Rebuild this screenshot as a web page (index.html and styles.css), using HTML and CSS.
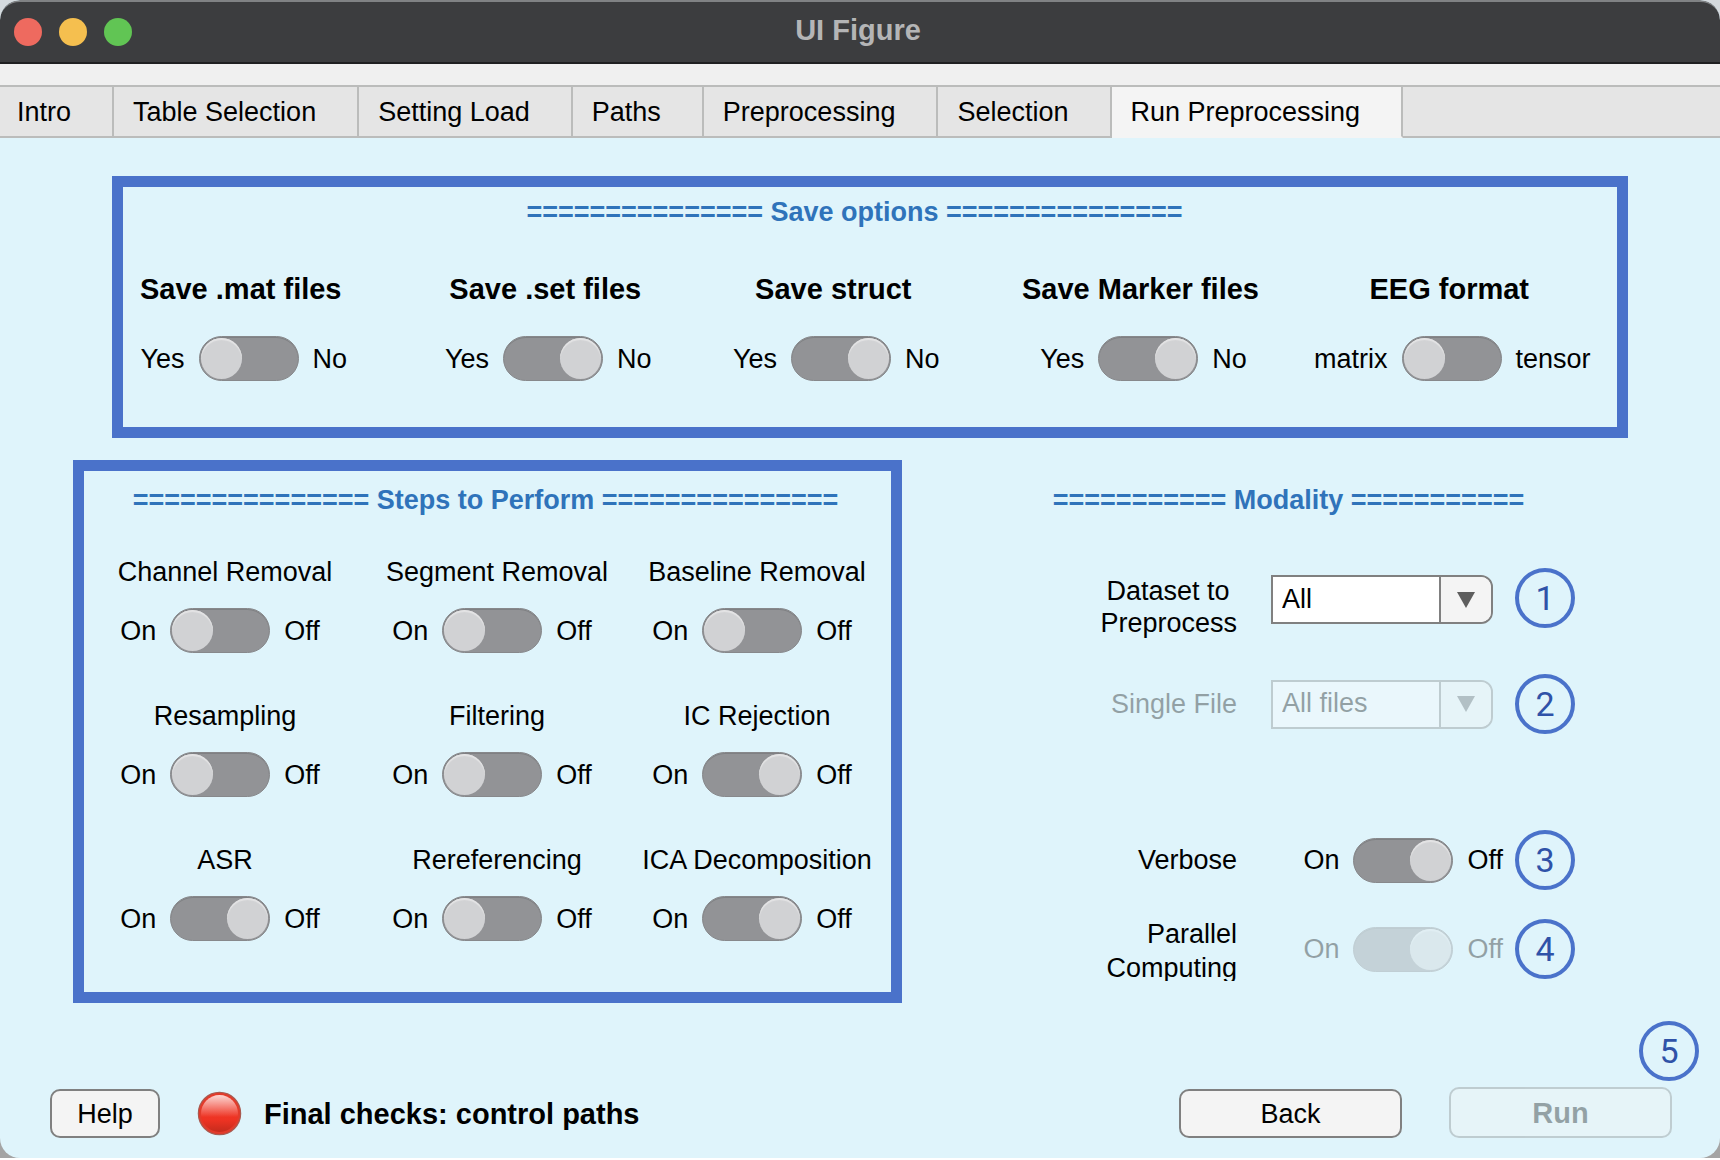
FILE: index.html
```html
<!DOCTYPE html>
<html lang="en">
<head>
<meta charset="utf-8">
<title>UI Figure</title>
<link rel="stylesheet" href="styles.css">
</head>
<body>
<div class="desktop">
<div class="window">
  <header class="titlebar">
    <div class="lights">
      <span class="light light-close"></span>
      <span class="light light-min"></span>
      <span class="light light-zoom"></span>
    </div>
    <h1 class="title">UI Figure</h1>
  </header>
  <nav class="tabs" role="tablist">
    <button class="tab" role="tab" type="button">Intro</button>
    <button class="tab" role="tab" type="button">Table Selection</button>
    <button class="tab" role="tab" type="button">Setting Load</button>
    <button class="tab" role="tab" type="button">Paths</button>
    <button class="tab" role="tab" type="button">Preprocessing</button>
    <button class="tab" role="tab" type="button">Selection</button>
    <button class="tab tab-active" role="tab" type="button" aria-selected="true">Run Preprocessing</button>
    <span class="tabs-rest"></span>
  </nav>

  <main class="content">
    <section class="frame save">
      <h2 class="heading">=============== Save options ===============</h2>
      <div class="save-grid">
        <div class="option">
          <label class="option-name" for="save-mat">Save .mat files</label>
          <div class="switch-row"><span>Yes</span><input class="switch" type="checkbox" role="switch" id="save-mat"><span>No</span></div>
        </div>
        <div class="option">
          <label class="option-name" for="save-set">Save .set files</label>
          <div class="switch-row"><span>Yes</span><input class="switch" type="checkbox" role="switch" id="save-set" checked><span>No</span></div>
        </div>
        <div class="option">
          <label class="option-name" for="save-struct">Save struct</label>
          <div class="switch-row"><span>Yes</span><input class="switch" type="checkbox" role="switch" id="save-struct" checked><span>No</span></div>
        </div>
        <div class="option">
          <label class="option-name" for="save-marker">Save Marker files</label>
          <div class="switch-row"><span>Yes</span><input class="switch" type="checkbox" role="switch" id="save-marker" checked><span>No</span></div>
        </div>
        <div class="option">
          <label class="option-name" for="eeg-format">EEG format</label>
          <div class="switch-row"><span>matrix</span><input class="switch" type="checkbox" role="switch" id="eeg-format"><span>tensor</span></div>
        </div>
      </div>
    </section>

    <div class="columns">
      <section class="frame steps">
        <h2 class="heading">=============== Steps to Perform ===============</h2>
        <div class="steps-grid">
          <div class="step">
            <label class="step-name" for="channel">Channel Removal</label>
            <div class="switch-row"><span>On</span><input class="switch" type="checkbox" role="switch" id="channel"><span>Off</span></div>
          </div>
          <div class="step">
            <label class="step-name" for="segment">Segment Removal</label>
            <div class="switch-row"><span>On</span><input class="switch" type="checkbox" role="switch" id="segment"><span>Off</span></div>
          </div>
          <div class="step">
            <label class="step-name" for="baseline">Baseline Removal</label>
            <div class="switch-row"><span>On</span><input class="switch" type="checkbox" role="switch" id="baseline"><span>Off</span></div>
          </div>
          <div class="step">
            <label class="step-name" for="resampling">Resampling</label>
            <div class="switch-row"><span>On</span><input class="switch" type="checkbox" role="switch" id="resampling"><span>Off</span></div>
          </div>
          <div class="step">
            <label class="step-name" for="filtering">Filtering</label>
            <div class="switch-row"><span>On</span><input class="switch" type="checkbox" role="switch" id="filtering"><span>Off</span></div>
          </div>
          <div class="step">
            <label class="step-name" for="rejection">IC Rejection</label>
            <div class="switch-row"><span>On</span><input class="switch" type="checkbox" role="switch" id="rejection" checked><span>Off</span></div>
          </div>
          <div class="step">
            <label class="step-name" for="asr">ASR</label>
            <div class="switch-row"><span>On</span><input class="switch" type="checkbox" role="switch" id="asr" checked><span>Off</span></div>
          </div>
          <div class="step">
            <label class="step-name" for="reref">Rereferencing</label>
            <div class="switch-row"><span>On</span><input class="switch" type="checkbox" role="switch" id="reref"><span>Off</span></div>
          </div>
          <div class="step">
            <label class="step-name" for="ica">ICA Decomposition</label>
            <div class="switch-row"><span>On</span><input class="switch" type="checkbox" role="switch" id="ica" checked><span>Off</span></div>
          </div>
        </div>
      </section>

      <section class="modality">
        <h2 class="heading">=========== Modality ===========</h2>
        <div class="field field-dataset">
          <label class="field-name" for="dataset">Dataset to&nbsp;<br>Preprocess</label>
          <div class="dropdown">
            <select class="dropdown-input" id="dataset"><option>All</option></select>
            <span class="dropdown-arrow"><svg width="18" height="16" viewBox="0 0 18 16"><path d="M0 0H18L9 16Z" fill="#5e5e5e"/></svg></span>
          </div>
          <span class="badge">1</span>
        </div>
        <div class="field field-file">
          <label class="field-name dimmed" for="file">Single File</label>
          <div class="dropdown dimmed">
            <select class="dropdown-input" id="file" disabled><option>All files</option></select>
            <span class="dropdown-arrow"><svg width="18" height="16" viewBox="0 0 18 16"><path d="M0 0H18L9 16Z" fill="#5e5e5e"/></svg></span>
          </div>
          <span class="badge">2</span>
        </div>
        <div class="field field-verbose">
          <label class="field-name" for="verbose">Verbose</label>
          <div class="switch-row"><span>On</span><input class="switch" type="checkbox" role="switch" id="verbose" checked><span>Off</span></div>
          <span class="badge">3</span>
        </div>
        <div class="field field-parallel">
          <label class="field-name" for="parallel">Parallel<br>Computing</label>
          <div class="switch-row dimmed"><span>On</span><input class="switch" type="checkbox" role="switch" id="parallel" checked disabled><span>Off</span></div>
          <span class="badge">4</span>
        </div>
      </section>
    </div>
  </main>

  <footer class="footer">
    <button class="button button-help" type="button">Help</button>
    <svg class="lamp" width="45" height="45" viewBox="0 0 45 45" role="img" aria-label="Red lamp">
      <defs>
        <linearGradient id="lamp-body" x1="0" y1="0" x2="0" y2="1"><stop offset="0" stop-color="#f03a29"/><stop offset=".65" stop-color="#ee3323"/><stop offset="1" stop-color="#bd2a1c"/></linearGradient>
        <linearGradient id="lamp-shine" x1="0" y1="0" x2="0" y2="1"><stop offset="0" stop-color="#fff" stop-opacity=".8"/><stop offset=".6" stop-color="#fff" stop-opacity="0"/></linearGradient>
      </defs>
      <circle cx="22.500" cy="22.500" r="21" fill="url(#lamp-body)" stroke="#a95a50" stroke-width="1.500"/>
      <circle cx="22.500" cy="22.500" r="19.500" fill="none" stroke="#e23b2b" stroke-width="2"/>
      <circle cx="22.500" cy="22.500" r="18.500" fill="url(#lamp-shine)"/>
    </svg>
    <p class="status">Final checks: control paths</p>
    <button class="button button-wide" type="button">Back</button>
    <div class="run">
      <button class="button button-wide button-run dimmed" type="button" disabled>Run</button>
      <span class="badge run-badge">5</span>
    </div>
  </footer>
</div>
</div>
</body>
</html>
```

FILE: styles.css
```css
* {
  box-sizing: border-box;
}

body {
  margin: 0;
  background: #fff;
  color: #000;
  font-family: "Liberation Sans", Arial, sans-serif;
  font-size: 27px;
  line-height: 32px;
}

.desktop {
  background: linear-gradient(#d5dade 50%, #a4a4a4 50%);
}

.window {
  overflow: hidden;
  border-radius: 20px;
  background: #dff4fb;
}

.titlebar {
  position: relative;
  display: flex;
  align-items: center;
  justify-content: center;
  height: 64px;
  border-top: 2px solid #808284;
  border-bottom: 2px solid #1f2021;
  border-radius: 20px 20px 0 0;
  background: #3c3d3f;
}

.lights {
  position: absolute;
  left: 14px;
  display: flex;
  gap: 17px;
}

.light {
  width: 28px;
  height: 28px;
  border-radius: 50%;
}

.light-close { background: #ee6a5f; }
.light-min { background: #f5bf4f; }
.light-zoom { background: #61c554; }

.title {
  margin: 0;
  padding: 0 4px 4px 0;
  color: #b4b5b6;
  font-size: 29px;
  line-height: 34px;
}

.tabs {
  display: flex;
  padding-top: 21px;
  background: #f0f0f0;
}

.tab,
.tabs-rest {
  height: 53px;
  border: 0 solid #bbbcbb;
  border-width: 2px 0;
  background: #e5e5e5;
}

.tab {
  padding: 0 41px 0 19px;
  border-right-width: 2px;
  color: #000;
  font: inherit;
  white-space: nowrap;
}

.tab:first-child {
  padding-left: 17px;
}

.tab-active {
  border-bottom-color: #f4f4f4;
  background: #f4f4f4;
}

.tabs-rest {
  flex: 1;
}

.content {
  padding-top: 38px;
}

.frame {
  border: 11px solid #4a72ca;
}

.heading {
  margin: 0;
  color: #2f73ba;
  font-size: 27px;
  line-height: 32px;
  text-align: center;
  white-space: nowrap;
}

.save {
  margin: 0 92px 22px 112px;
  padding: 9px 0 46px 17px;
}

.save .heading {
  padding-right: 48px;
}

.save-grid {
  display: grid;
  grid-template-columns: 305fr 288fr 289fr 292fr 303fr;
  justify-items: start;
  margin-top: 44px;
}

.option,
.step {
  display: flex;
  flex-direction: column;
  align-items: center;
}

.option {
  gap: 30px;
}

.option-name {
  padding-right: 6px;
  font-size: 29px;
  font-weight: bold;
  line-height: 34px;
  white-space: nowrap;
}

.switch-row {
  display: flex;
  align-items: center;
  gap: 14px;
}

.switch {
  appearance: none;
  display: flex;
  flex: none;
  width: 100px;
  height: 45px;
  margin: 0;
  padding: 1px;
  border: 1px solid #87888b;
  border-radius: 23px;
  background: #929396;
  box-shadow: inset 0 1px 0 #7f8083;
}

.switch::before {
  content: "";
  width: 41px;
  height: 41px;
  border-radius: 50%;
  background: #d1d2d4;
  box-shadow: inset 0 2px 1px #e4e4e5;
}

.switch:checked {
  justify-content: flex-end;
}

.columns {
  display: grid;
  grid-template-columns: 829fr 525fr;
  gap: 148px;
  padding: 0 145px 0 73px;
}

.steps {
  padding: 13px 0 51px;
}

.steps .heading {
  padding-right: 4px;
}

.steps-grid {
  display: grid;
  grid-template-columns: 272fr 272fr 248fr;
  row-gap: 47px;
  margin-top: 40px;
  padding-right: 15px;
}

.step {
  gap: 20px;
}

.step-name {
  padding-left: 10px;
  white-space: nowrap;
}

.modality {
  padding-top: 24px;
}

.modality .heading {
  padding-right: 48px;
}

.field {
  display: grid;
  grid-template-columns: 1fr 232px 72px;
  align-items: center;
}

.field-name {
  padding-right: 34px;
  text-align: right;
}

.field .switch-row {
  justify-content: flex-end;
}

.field .badge {
  margin-left: 12px;
}

.field-dataset {
  align-items: start;
  margin-top: 52px;
}

.field-dataset .field-name,
.field-dataset .dropdown {
  margin-top: 7px;
}

.field-file {
  margin-top: 35px;
}

.field-verbose {
  margin-top: 96px;
}

.field-parallel {
  margin-top: 27px;
}

.field-parallel .field-name {
  height: 64px;
  overflow: hidden;
  line-height: 34px;
}

.dropdown {
  display: flex;
  width: 222px;
  height: 49px;
  overflow: hidden;
  border: 2px solid #808080;
  border-radius: 0 12px 12px 0;
  background: #fff;
}

.dropdown-input {
  appearance: none;
  flex: 1;
  min-width: 0;
  padding: 0 0 2px 9px;
  border: 0;
  background: #fff;
  color: #000;
  font: inherit;
  opacity: 1;
}

.dropdown-arrow {
  display: flex;
  align-items: center;
  justify-content: center;
  width: 52px;
  border-left: 2px solid #808080;
  background: #f4f4f4;
}

.dimmed {
  opacity: 0.34;
}

.badge {
  display: flex;
  align-items: center;
  justify-content: center;
  width: 60px;
  height: 60px;
  border: 4px solid #4a72ca;
  border-radius: 50%;
  color: #2f52a8;
  font-family: Roboto, sans-serif;
  font-size: 34px;
}

.footer {
  display: flex;
  align-items: flex-end;
  padding: 84px 48px 20px 50px;
}

.button {
  height: 49px;
  padding: 0;
  border: 2px solid #808080;
  border-radius: 10px;
  background: #f4f4f4;
  color: #000;
  font: inherit;
}

.button-help {
  width: 110px;
}

.button-wide {
  width: 223px;
}

.button-run {
  height: 51px;
  font-size: 29px;
  font-weight: bold;
}

.lamp {
  margin: 0 22px 2px 37px;
}

.status {
  margin: 0 auto 7px 0;
  font-size: 29px;
  font-weight: bold;
  line-height: 34px;
}

.run {
  position: relative;
  display: flex;
  margin-left: 47px;
}

.run-badge {
  position: absolute;
  top: -66px;
  right: -27px;
}
```
